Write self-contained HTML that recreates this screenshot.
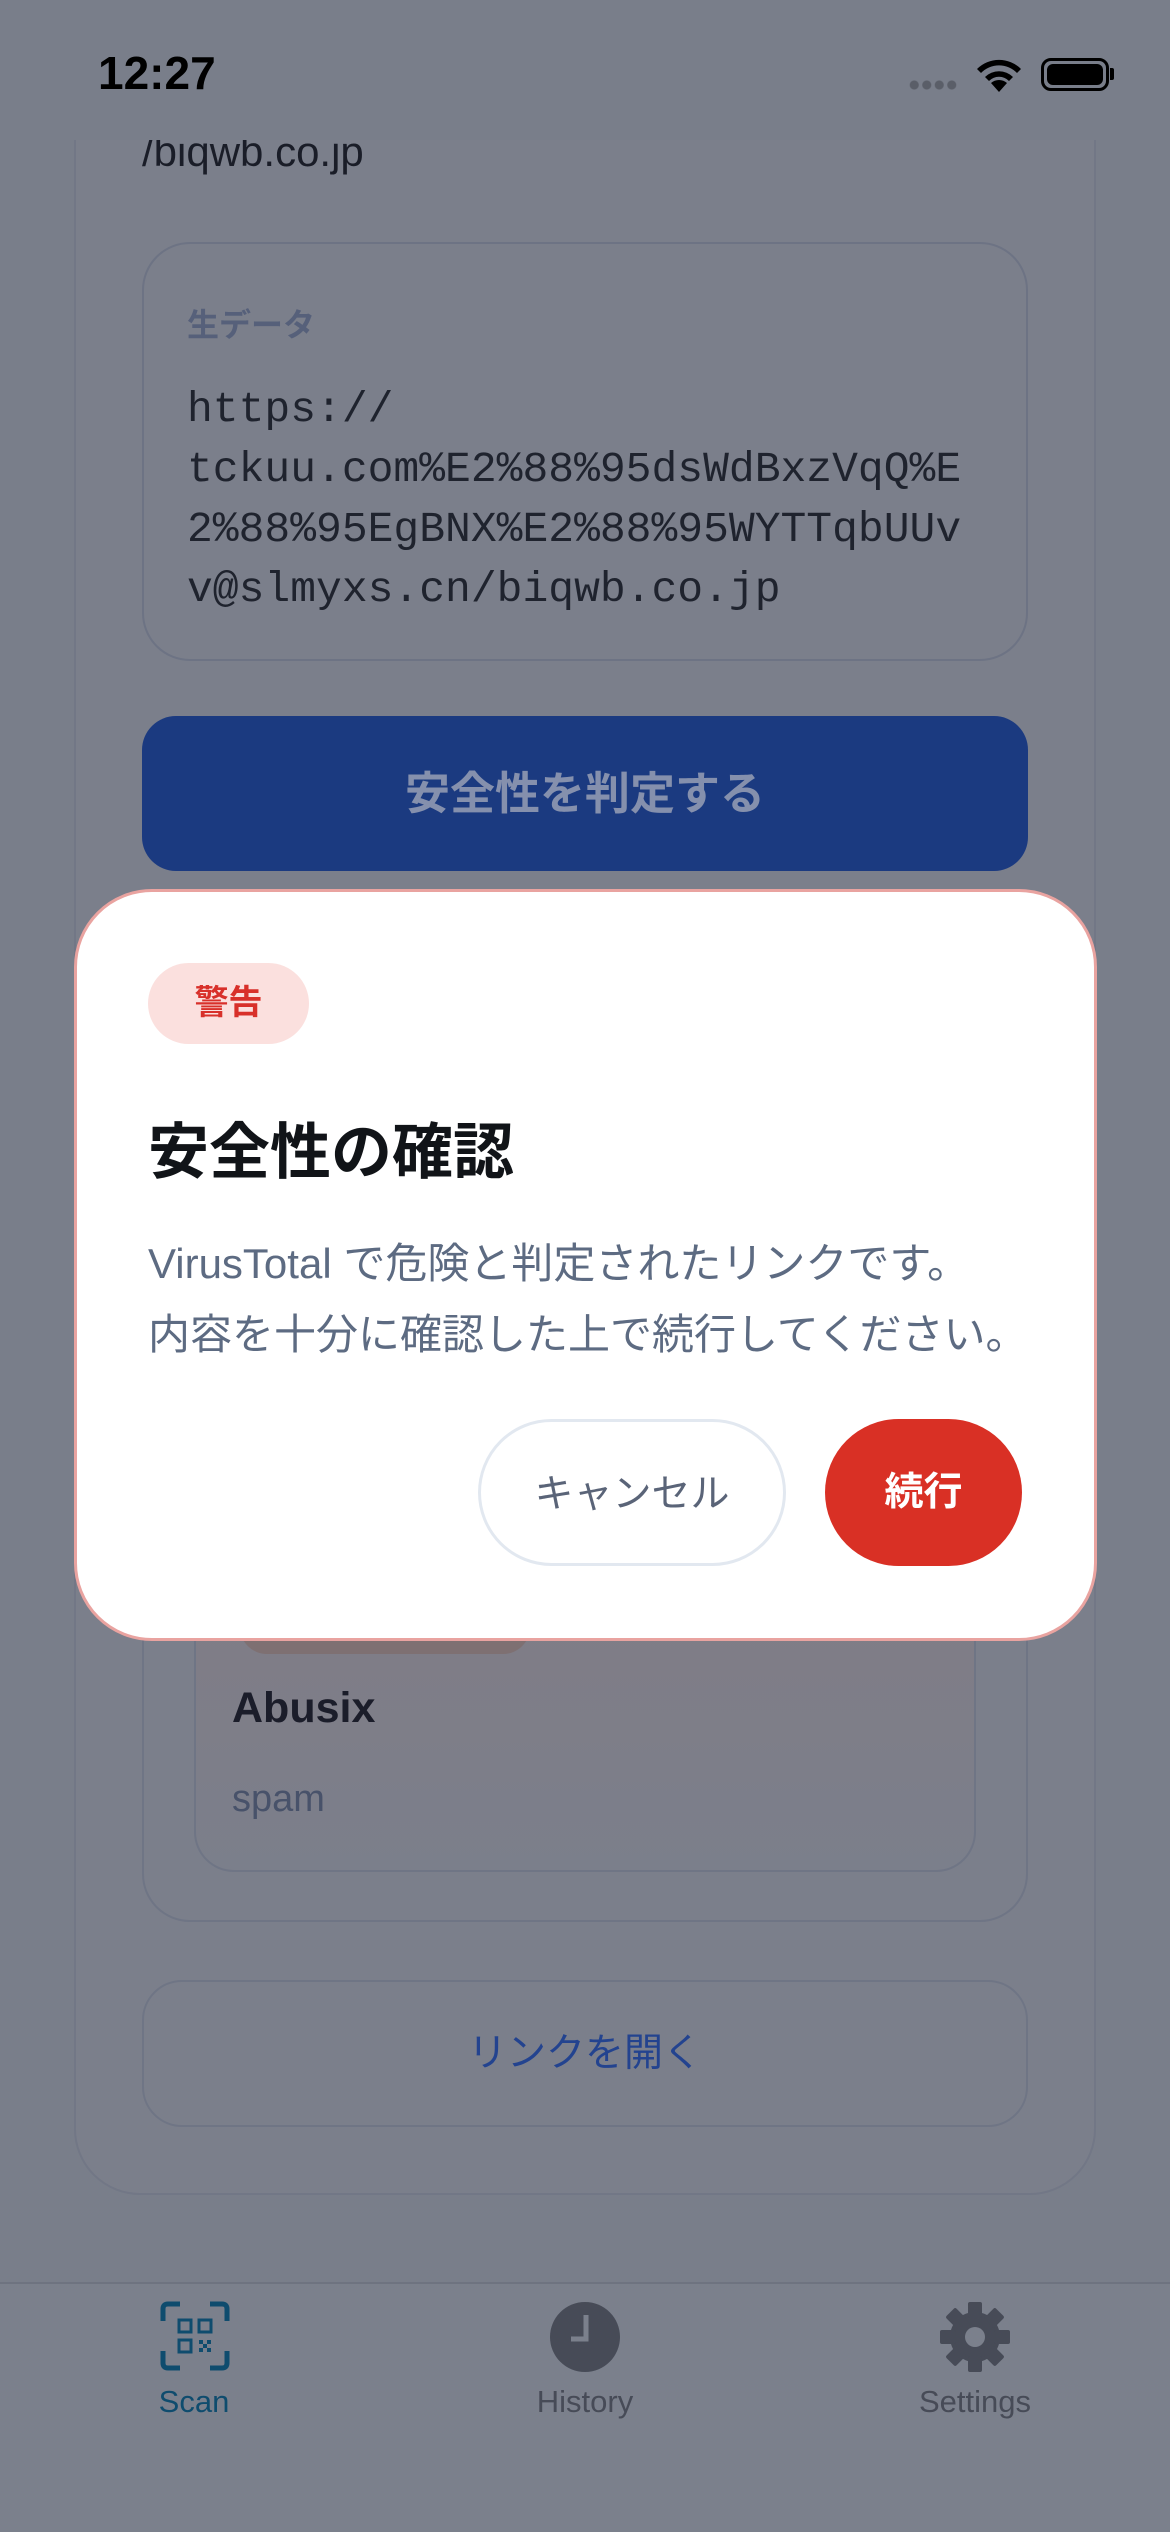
<!DOCTYPE html>
<html><head><meta charset="utf-8"><style>
*{margin:0;padding:0;box-sizing:border-box}
body{width:1170px;height:2532px;background:#797e8a;position:relative;overflow:hidden;font-family:"Liberation Sans","Noto Sans CJK JP",sans-serif}
.abs{position:absolute}
</style></head><body>
<div class="abs" style="left:74px;top:60px;width:1022px;height:2135px;border:2px solid #727786;border-radius:66px;background:#7b7f8b"></div>
<div class="abs" style="left:142px;top:128px;font-size:42px;color:#1a1d28">/biqwb.co.jp</div>
<div class="abs" style="left:142px;top:242px;width:886px;height:419px;border:2px solid #6d7384;border-radius:48px"></div>
<div class="abs" style="left:187px;top:300px;font-size:32px;color:#56607a;font-weight:bold">生データ</div>
<div class="abs" style="left:187px;top:380px;font-family:'Liberation Mono',monospace;font-size:43px;line-height:60px;color:#1f232e;white-space:pre">https://
tckuu.com%E2%88%95dsWdBxzVqQ%E
2%88%95EgBNX%E2%88%95WYTTqbUUv
v@slmyxs.cn/biqwb.co.jp</div>
<div class="abs" style="left:142px;top:716px;width:886px;height:155px;border-radius:34px;background:#1b3a80;color:#8590ad;font-size:45px;font-weight:bold;text-align:center;line-height:155px">安全性を判定する</div>
<div class="abs" style="left:142px;top:1560px;width:886px;height:362px;border:2px solid #6f7585;border-radius:48px;border-top:none"></div>
<div class="abs" style="left:194px;top:1560px;width:782px;height:312px;border:2px solid #6f7585;border-radius:0 0 40px 40px;border-top:none;background:linear-gradient(#817c85,#7b7f8b)"></div>
<div class="abs" style="left:240px;top:1600px;width:290px;height:54px;border-radius:27px;background:#7e7072"></div>
<div class="abs" style="left:232px;top:1684px;font-size:43px;font-weight:bold;color:#1b1d2a">Abusix</div>
<div class="abs" style="left:232px;top:1778px;font-size:38px;color:#48526a">spam</div>
<div class="abs" style="left:142px;top:1980px;width:886px;height:147px;border:2px solid #6f7585;border-radius:40px;text-align:center;line-height:143px;font-size:39px;color:#23438f">リンクを開く</div>
<div class="abs" style="left:0;top:0;width:1170px;height:140px;background:#797e8a"></div>
<div class="abs" style="left:98px;top:46px;font-size:46px;font-weight:bold;color:#000">12:27</div>
<div class="abs" style="left:908px;top:80px;width:50px;height:10px;background:radial-gradient(circle,#5a5e68 4px,transparent 5px) 0 0/12.5px 10px repeat-x"></div>
<svg class="abs" style="left:972px;top:54px" width="54" height="40" viewBox="0 0 54 40"><path d="M27 38 L19 29 A12 12 0 0 1 35 29 Z M13 23 A20 20 0 0 1 41 23 L37 27 A14 14 0 0 0 17 27Z M5 15 A31 31 0 0 1 49 15 L45 19 A25 25 0 0 0 9 19Z" fill="#000"/></svg>
<div class="abs" style="left:1041px;top:58px;width:68px;height:33px;border:3px solid #000;border-radius:10px;padding:3px"><div style="width:100%;height:100%;background:#000;border-radius:6px"></div></div>
<div class="abs" style="left:1110px;top:68px;width:4px;height:12px;background:#000;border-radius:0 2px 2px 0"></div>
<div class="abs" style="left:74px;top:889px;width:1023px;height:752px;background:#fff;border:3px solid #e9a3a0;border-radius:78px"></div>
<div class="abs" style="left:148px;top:963px;width:161px;height:81px;border-radius:41px;background:#fbe0de;color:#d8302a;font-size:34px;font-weight:bold;text-align:center;line-height:81px">警告</div>
<div class="abs" style="left:148px;top:1102px;font-size:61px;font-weight:bold;color:#111418">安全性の確認</div>
<div class="abs" style="left:148px;top:1228px;font-size:42px;line-height:71px;color:#5d6b82;white-space:nowrap">VirusTotal で危険と判定されたリンクです。<br>内容を十分に確認した上で続行してください。</div>
<div class="abs" style="left:478px;top:1419px;width:308px;height:147px;border:3px solid #e2e8f0;border-radius:74px;text-align:center;line-height:145px;font-size:39px;color:#5a6478">キャンセル</div>
<div class="abs" style="left:825px;top:1419px;width:197px;height:147px;border-radius:74px;background:#d93025;text-align:center;line-height:147px;font-size:39px;font-weight:bold;color:#fff">続行</div>
<div class="abs" style="left:0;top:2282px;width:1170px;height:250px;border-top:2px solid #6e7380;background:#7b808c"></div>
<svg class="abs" style="left:160px;top:2301px" width="70" height="70" viewBox="0 0 70 70" fill="none" stroke="#0f4c6e" stroke-width="5"><path d="M3 20V8Q3 3 8 3H20M50 3H62Q67 3 67 8V20M67 50V62Q67 67 62 67H50M20 67H8Q3 67 3 62V50"/><g stroke-width="3"><rect x="19" y="19" width="12" height="12"/><rect x="39" y="19" width="12" height="12"/><rect x="19" y="39" width="12" height="12"/></g><g fill="#0f4c6e" stroke="none"><rect x="39" y="39" width="4" height="4"/><rect x="47" y="39" width="4" height="4"/><rect x="43" y="43" width="4" height="4"/><rect x="39" y="47" width="4" height="4"/><rect x="47" y="47" width="4" height="4"/></g></svg>
<div class="abs" style="left:194px;top:2384px;width:0;"><div style="position:absolute;transform:translateX(-50%);font-size:31px;color:#0f4c6e">Scan</div></div>
<svg class="abs" style="left:549px;top:2301px" width="72" height="72" viewBox="0 0 72 72"><circle cx="36" cy="36" r="35" fill="#474b57"/><path d="M37 14V38H22" stroke="#7b808c" stroke-width="5" fill="none"/></svg>
<div class="abs" style="left:585px;top:2384px;width:0"><div style="position:absolute;transform:translateX(-50%);font-size:31px;color:#474b57">History</div></div>
<svg class="abs" style="left:939px;top:2301px" width="72" height="72" viewBox="0 0 72 72"><g fill="#474b57"><circle cx="36" cy="36" r="25"/><g id="t"><rect x="29" y="1" width="14" height="16" rx="2"/><rect x="29" y="55" width="14" height="16" rx="2"/></g><use href="#t" transform="rotate(45 36 36)"/><use href="#t" transform="rotate(90 36 36)"/><use href="#t" transform="rotate(135 36 36)"/></g><circle cx="36" cy="36" r="10" fill="#7b808c"/></svg>
<div class="abs" style="left:975px;top:2384px;width:0"><div style="position:absolute;transform:translateX(-50%);font-size:31px;color:#474b57">Settings</div></div>
</body></html>
